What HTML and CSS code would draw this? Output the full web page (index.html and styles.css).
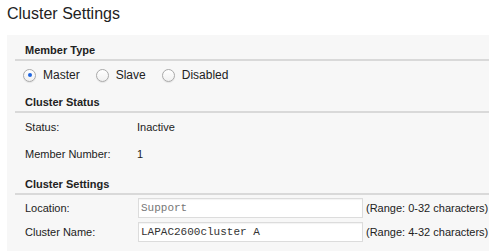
FILE: index.html
```html
<!DOCTYPE html>
<html lang="en">
<head>
    <meta charset="UTF-8">
    <meta name="viewport" content="width=device-width, initial-scale=1.0">
    <title>Cluster Settings</title>
    <link rel="stylesheet" href="styles.css">
</head>
<body>
    <h1 class="page-title">Cluster Settings</h1>

    <div class="panel">
        <div class="section-head">Member Type</div>
        <div class="radio-row">
            <label class="radio"><input type="radio" name="memberType" checked><span>Master</span></label>
            <label class="radio"><input type="radio" name="memberType"><span>Slave</span></label>
            <label class="radio"><input type="radio" name="memberType"><span>Disabled</span></label>
        </div>

        <div class="section-head">Cluster Status</div>
        <div class="status-list">
            <div class="status-row">
                <span class="field-label">Status:</span>
                <span>Inactive</span>
            </div>
            <div class="status-row">
                <span class="field-label">Member Number:</span>
                <span>1</span>
            </div>
        </div>

        <div class="section-head">Cluster Settings</div>
        <div class="settings-list">
            <div class="settings-row">
                <span class="field-label">Location:</span>
                <input type="text" class="text-input muted" value="Support">
                <span class="hint">(Range: 0-32 characters)</span>
            </div>
            <div class="settings-row">
                <span class="field-label">Cluster Name:</span>
                <input type="text" class="text-input" value="LAPAC2600cluster A">
                <span class="hint">(Range: 4-32 characters)</span>
            </div>
        </div>
    </div>
</body>
</html>
```

FILE: styles.css
```css
/* Basic Styles */
body {
    font-family: "Liberation Sans", Arial, sans-serif;
    margin: 0;
    padding: 0;
    background-color: #ffffff;
    color: #222;
}

.page-title {
    margin: 0;
    padding: 4px 0 0 7px;
    font-size: 16px;
    line-height: 20px;
    font-weight: normal;
    color: #222;
}

.panel {
    margin: 11px 0 0 7px;
    width: 474px;
    padding: 2px 0 12px 8px;
    background-color: #f7f7f7;
}

.section-head {
    padding: 6px 0 2px 10px;
    font-size: 11px;
    line-height: 14px;
    font-weight: bold;
    color: #222;
    border-bottom: 2px solid #d9d9d9;
}

.radio-row {
    display: flex;
    align-items: center;
    gap: 16px;
    height: 28px;
    padding-left: 8px;
}

.radio {
    display: flex;
    align-items: center;
    gap: 7px;
    font-size: 12px;
    color: #222;
}

.radio input {
    appearance: none;
    -webkit-appearance: none;
    margin: 0;
    width: 13px;
    height: 13px;
    border: 1px solid #a9a9a9;
    border-radius: 50%;
    background: linear-gradient(#ffffff, #f0f0f0);
    box-shadow: 0 1px 1px rgba(0, 0, 0, 0.08);
    position: relative;
}

.radio input:checked::after {
    content: "";
    position: absolute;
    left: 3.5px;
    top: 3.5px;
    width: 4px;
    height: 4px;
    border-radius: 50%;
    background-color: #1f66e0;
}

.status-list {
    padding: 0 0 4px 10px;
}

.status-row {
    display: flex;
    align-items: center;
    height: 27px;
    font-size: 11px;
}

.field-label {
    width: 112px;
    flex-shrink: 0;
    font-size: 11px;
}

.settings-list {
    padding: 1px 0 0 10px;
}

.settings-row {
    display: flex;
    align-items: center;
    height: 24px;
    font-size: 11px;
}

.text-input {
    box-sizing: border-box;
    width: 225px;
    height: 20px;
    margin: 0 0 0 1px;
    padding: 0 2px;
    border: 1px solid #dcdcdc;
    background-color: #fff;
    font-family: "Liberation Mono", "Courier New", monospace;
    font-size: 11px;
    color: #333;
    box-shadow: inset 0 1px 1px rgba(0, 0, 0, 0.05);
}

.text-input.muted {
    color: #777;
}

.hint {
    margin-left: 3px;
    font-size: 11px;
    white-space: nowrap;
}
```
